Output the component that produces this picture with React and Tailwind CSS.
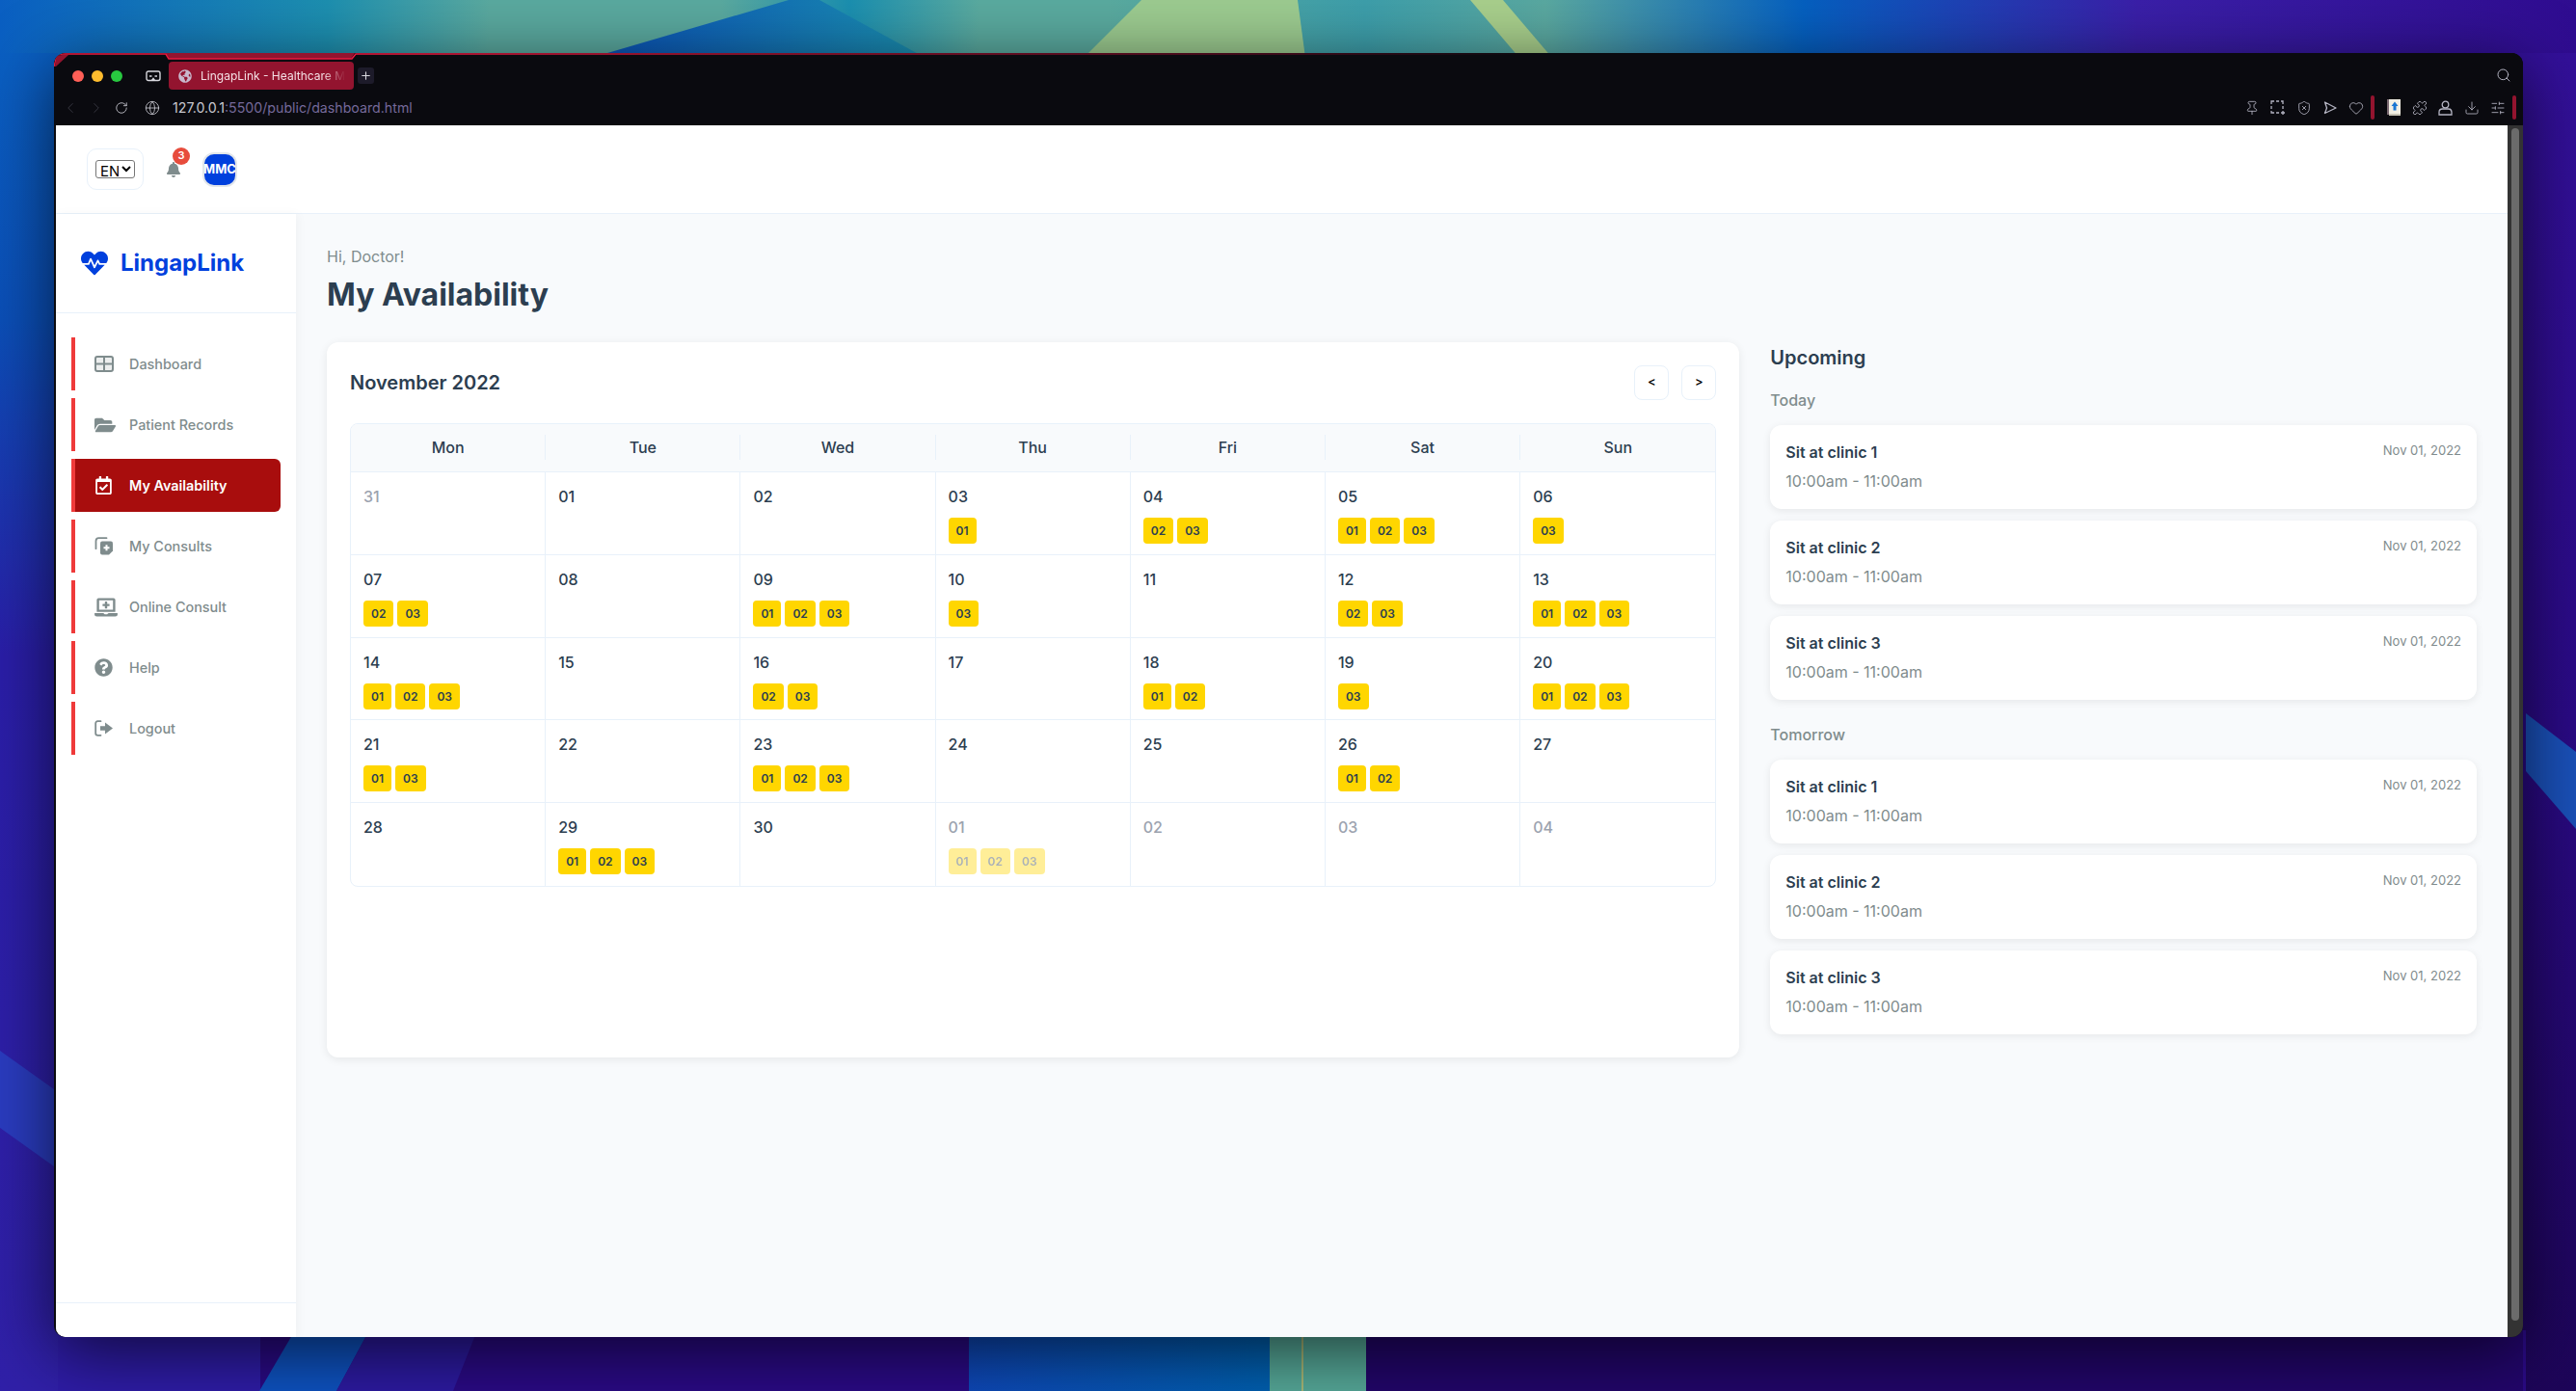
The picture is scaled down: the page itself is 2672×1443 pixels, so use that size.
import { ChevronLeft, ChevronRight, Download, Globe, Heart, Pin, Plus, Puzzle, RotateCw, Search, ShieldX, SlidersHorizontal } from "lucide-react"
import { FaBell, FaFolderOpen, FaGlobeAmericas, FaHeartbeat, FaLaptopMedical, FaQuestionCircle, FaRegCalendarCheck } from "react-icons/fa"

function Wallpaper() {
    return (
        <svg className="absolute inset-0" width="2672" height="1443" viewBox="0 0 2672 1443">
            <defs>
                <linearGradient id="top" x1="0" x2="1" y1="0" y2="0">
                    <stop offset="0" stopColor="#0a5fc2" />
                    <stop offset="0.127" stopColor="#1d8fb0" />
                    <stop offset="0.19" stopColor="#5aa99f" />
                    <stop offset="0.28" stopColor="#5aa99f" />
                    <stop offset="0.33" stopColor="#1b8fb0" />
                    <stop offset="0.38" stopColor="#5aaa9f" />
                    <stop offset="0.43" stopColor="#5aaa9f" />
                    <stop offset="0.53" stopColor="#3d9eaa" />
                    <stop offset="0.6" stopColor="#5aa8a0" />
                    <stop offset="0.7" stopColor="#0560c0" />
                    <stop offset="0.83" stopColor="#3a1fa8" />
                    <stop offset="1" stopColor="#2f0c90" />
                </linearGradient>
                <linearGradient id="side" x1="0" x2="0" y1="0" y2="1">
                    <stop offset="0" stopColor="#0a5fc2" />
                    <stop offset="0.2" stopColor="#0b4fb8" />
                    <stop offset="0.45" stopColor="#2a1ea8" />
                    <stop offset="1" stopColor="#3020a8" />
                </linearGradient>
                <linearGradient id="right" x1="0" x2="0" y1="0" y2="1">
                    <stop offset="0" stopColor="#33109a" />
                    <stop offset="0.5" stopColor="#2a0a85" />
                    <stop offset="1" stopColor="#1d0558" />
                </linearGradient>
                <linearGradient id="blue" x1="0" x2="1" y1="0" y2="0">
                    <stop offset="0" stopColor="#0e48b8" />
                    <stop offset="1" stopColor="#0060b0" />
                </linearGradient>
                <linearGradient id="wedge" x1="613" x2="960" y1="0" y2="0" gradientUnits="userSpaceOnUse">
                    <stop offset="0" stopColor="#0a50b8" />
                    <stop offset="1" stopColor="#1b8fb0" />
                </linearGradient>
            </defs>
            <rect x="0" y="0" width="2672" height="60" fill="url(#top)" />
            <rect x="0" y="55" width="60" height="1388" fill="url(#side)" />
            <rect x="2610" y="55" width="62" height="1388" fill="url(#right)" />
            <polygon points="2620,740 2672,780 2672,860 2620,800" fill="#1a50b8" />
            <polygon points="0,1090 56,1130 56,1210 0,1170" fill="#2a3cc0" />
            <polygon points="818,0 613,60 960,60 850,0" fill="url(#wedge)" />
            <polygon points="1184,0 1346,0 1354,60 1124,60" fill="#9ccb90" />
            <polygon points="1525,0 1559,0 1610,60 1576,60" fill="#a8cf8c" />
            <rect x="60" y="1380" width="2560" height="63" fill="#2a0a85" />
            <rect x="60" y="1380" width="210" height="63" fill="#2e1ca6" />
            <polygon points="306,1380 383,1380 349,1443 269,1443" fill="#0e52c0" />
            <polygon points="383,1380 495,1380 470,1443 349,1443" fill="#2c1aa0" />
            <rect x="1005" y="1380" width="312" height="63" fill="url(#blue)" />
            <rect x="1317" y="1380" width="100" height="63" fill="#55a898" />
            <rect x="1350" y="1380" width="2" height="63" fill="#a8b878" />
            <rect x="1417" y="1380" width="1200" height="63" fill="#22066a" />
        </svg>
    )
}

function MaskIcon() {
    return (
        <svg width="16" height="12" viewBox="0 0 16 12" fill="none" stroke="#d8d8de" strokeWidth="1.4">
            <rect x="1" y="1" width="14" height="9.5" rx="2" />
            <path d="M4 6h2.5M9.5 6H12M6.5 10.5 8 8.5l1.5 2" />
        </svg>
    )
}

function ScreenshotIcon() {
    return (
        <svg width="16" height="16" viewBox="0 0 16 16" fill="none" stroke="#b4b4c2" strokeWidth="1.3">
            <path d="M1 4V1h3M6 1h3M11 1h2v3M13 6v3M1 6v3M1 11v2h3M6 13h3" />
            <path d="M13 11v4M11 13h4" />
        </svg>
    )
}

function SendIcon() {
    return (
        <svg width="16" height="16" viewBox="0 0 16 16" fill="none" stroke="#b4b4c2" strokeWidth="1.3" strokeLinejoin="round">
            <path d="M2.5 2 14 8 2.5 13.5 4.5 8z" />
        </svg>
    )
}

function BookIcon() {
    return (
        <svg width="14" height="17" viewBox="0 0 14 17">
            <rect x="0" y="0" width="3" height="16" fill="#7b6a72" />
            <rect x="2" y="0" width="12" height="15" fill="#f2efe4" />
            <rect x="2" y="15" width="12" height="2" fill="#c8c4b6" />
            <path d="M8 2.5 11.5 7H9.5v4.5h-3V7H4.5z" fill="#1a76d2" />
        </svg>
    )
}

function AccountIcon() {
    return (
        <svg width="15" height="16" viewBox="0 0 15 16" fill="none" stroke="#b4b4c2" strokeWidth="1.3">
            <circle cx="7.5" cy="4.5" r="3.3" />
            <path d="M1 12.5C1 10 3 9 4.5 9h6c1.5 0 3.500 1 3.500 3.500V15H1z" />
        </svg>
    )
}

function DashboardIcon() {
    return (
        <svg width="20" height="17" viewBox="0 0 20 17" fill="none">
            <rect x="1" y="1" width="18" height="15" rx="2" fill="#7f8c8d" fillOpacity="0.15" stroke="#7f8c8d" strokeWidth="2" />
            <path d="M10 1v15M1 8.500h18" stroke="#7f8c8d" strokeWidth="2" />
        </svg>
    )
}

function ConsultsIcon() {
    return (
        <svg width="19" height="19" viewBox="0 0 19 19" fill="none">
            <path d="M12.500 1.200H4.500a3 3 0 0 0-3 3v8" stroke="#7f8c8d" strokeWidth="1.800" strokeLinecap="round" />
            <path d="M6 6.500a2 2 0 0 1 2-2h9a2 2 0 0 1 2 2v8l-4 4H8a2 2 0 0 1-2-2z" fill="#7f8c8d" />
            <path d="M12.500 8.200v6M9.500 11.200h6" stroke="#fff" strokeWidth="2" />
        </svg>
    )
}

function LogoutIcon() {
    return (
        <svg width="19" height="17" viewBox="0 0 19 17" fill="none">
            <path d="M6.500 1.200H3.200a2 2 0 0 0-2 2v10.600a2 2 0 0 0 2 2h3.300" stroke="#7f8c8d" strokeWidth="1.800" strokeLinecap="round" />
            <path d="M6 6.300h5V2.500L19 8.500l-8 6v-3.800H6z" fill="#7f8c8d" />
        </svg>
    )
}

const navItems = [
    { label: "Dashboard", icon: <DashboardIcon /> },
    { label: "Patient Records", icon: <FaFolderOpen size={22} /> },
    { label: "My Availability", icon: <FaRegCalendarCheck size={19} />, active: true },
    { label: "My Consults", icon: <ConsultsIcon /> },
    { label: "Online Consult", icon: <FaLaptopMedical size={24} /> },
    { label: "Help", icon: <FaQuestionCircle size={19} /> },
    { label: "Logout", icon: <LogoutIcon /> },
]

const days = ["Mon", "Tue", "Wed", "Thu", "Fri", "Sat", "Sun"]

const cells = [
    { d: "31", muted: true },
    { d: "01" },
    { d: "02" },
    { d: "03", b: ["01"] },
    { d: "04", b: ["02", "03"] },
    { d: "05", b: ["01", "02", "03"] },
    { d: "06", b: ["03"] },
    { d: "07", b: ["02", "03"] },
    { d: "08" },
    { d: "09", b: ["01", "02", "03"] },
    { d: "10", b: ["03"] },
    { d: "11" },
    { d: "12", b: ["02", "03"] },
    { d: "13", b: ["01", "02", "03"] },
    { d: "14", b: ["01", "02", "03"] },
    { d: "15" },
    { d: "16", b: ["02", "03"] },
    { d: "17" },
    { d: "18", b: ["01", "02"] },
    { d: "19", b: ["03"] },
    { d: "20", b: ["01", "02", "03"] },
    { d: "21", b: ["01", "03"] },
    { d: "22" },
    { d: "23", b: ["01", "02", "03"] },
    { d: "24" },
    { d: "25" },
    { d: "26", b: ["01", "02"] },
    { d: "27" },
    { d: "28" },
    { d: "29", b: ["01", "02", "03"] },
    { d: "30" },
    { d: "01", muted: true, b: ["01", "02", "03"] },
    { d: "02", muted: true },
    { d: "03", muted: true },
    { d: "04", muted: true },
]

function BrowserChrome() {
    return (
        <div className="relative h-[75px] shrink-0 bg-[#0a0a0f]">
            <svg className="absolute left-0 top-0" width="2561" height="14" viewBox="0 0 2561 14" fill="none">
                <defs>
                    <linearGradient id="edge" x1="0" x2="2561" y1="0" y2="0" gradientUnits="userSpaceOnUse">
                        <stop offset="0" stopColor="#e8193f" />
                        <stop offset="0.14" stopColor="#e8193f" />
                        <stop offset="0.5" stopColor="#4a0a1c" />
                        <stop offset="0.6" stopColor="#0a0a0f" />
                    </linearGradient>
                </defs>
                <path d="M116 0h196l-4 6H120z" fill="#93142f" />
                <path d="M0 14 2 6Q3 1 9 1h107l3 5h190l4-5h2246" stroke="url(#edge)" strokeWidth="1.500" />
                <path d="M1 14 2 6Q3 2 9 2h6L2 14z" fill="#93142f" />
            </svg>
            <div className="flex h-[38px] items-end pl-[19px]">
                <div className="flex h-[29px] items-center">
                    <span className="h-3 w-3 rounded-full bg-[#ff5f57]" />
                    <span className="ml-2 h-3 w-3 rounded-full bg-[#febc2e]" />
                    <span className="ml-2 h-3 w-3 rounded-full bg-[#28c840]" />
                    <span className="ml-6 flex w-4 justify-center"><MaskIcon /></span>
                    <div className="ml-2 flex h-[29px] w-[192px] items-center overflow-hidden rounded-[4px] bg-[#93142f] pl-[10px] text-[12px] text-[#f4dfe4]">
                        <FaGlobeAmericas size={14} className="shrink-0 text-[#c9b8cc]" />
                        <span className="ml-[9px] whitespace-nowrap [mask-image:linear-gradient(to_right,black_85%,transparent)]">LingapLink - Healthcare M</span>
                    </div>
                    <span className="ml-1 flex h-[17px] w-[17px] items-center justify-center rounded-[3px] bg-[#1d1b2a] text-[#d8d8de]"><Plus size={13} /></span>
                </div>
                <Search size={16} strokeWidth={1.500} className="mb-[7px] ml-auto mr-[12px] text-[#b4b4c2]" />
            </div>
            <div className="flex h-[37px] items-center pl-[8px] pr-[7px]">
                <ChevronLeft size={18} strokeWidth={1.200} className="text-[#3a3a44]" />
                <ChevronRight size={18} strokeWidth={1.200} className="ml-[9px] text-[#3a3a44]" />
                <RotateCw size={14} strokeWidth={1.500} className="ml-[10px] text-[#c4c4cc]" />
                <Globe size={16} strokeWidth={1.300} className="ml-[17px] text-[#c4c4cc]" />
                <span className="ml-[13px] text-[14.200px] text-[#c8c8d0]">127.0.0.1<span className="text-[#75699a]">:5500/public/dashboard.html</span></span>
                <div className="ml-auto flex items-center text-[#b4b4c2]">
                    <span className="flex w-[27px] justify-center"><Pin size={16} strokeWidth={1.300} /></span>
                    <span className="flex w-[27px] justify-center"><ScreenshotIcon /></span>
                    <span className="flex w-[27px] justify-center"><ShieldX size={16} strokeWidth={1.300} /></span>
                    <span className="flex w-[27px] justify-center"><SendIcon /></span>
                    <span className="flex w-[27px] justify-center"><Heart size={16} strokeWidth={1.300} /></span>
                    <span className="ml-[2px] h-[25px] w-[4px] rounded-[2px] bg-[#93142f]" />
                    <span className="ml-[6px] flex w-[27px] justify-center"><BookIcon /></span>
                    <span className="flex w-[27px] justify-center"><Puzzle size={16} strokeWidth={1.300} /></span>
                    <span className="flex w-[27px] justify-center"><AccountIcon /></span>
                    <span className="flex w-[27px] justify-center"><Download size={16} strokeWidth={1.300} /></span>
                    <span className="flex w-[27px] justify-center"><SlidersHorizontal size={16} strokeWidth={1.300} /></span>
                    <span className="ml-[2px] h-[25px] w-[4px] rounded-[2px] bg-[#93142f]" />
                </div>
            </div>
        </div>
    )
}

function TopBar() {
    return (
        <header className="flex h-[92px] shrink-0 items-center border-b border-[#e8f1fa] bg-white pl-[32px]">
            <div className="flex h-[43px] w-[59px] items-center justify-center rounded-[10px] border border-[#e8f1fa]">
                <select className="h-[19px] w-[41px] appearance-auto rounded-[3px] border border-[#767676] bg-white text-[15px] text-black">
                    <option>EN</option>
                </select>
            </div>
            <div className="relative ml-[23px] text-[#7f8c8d]">
                <FaBell size={16} />
                <span className="absolute -right-[9px] -top-[15px] flex h-[18px] w-[18px] items-center justify-center rounded-full bg-[#e74c3c] text-[11px] font-semibold text-white">3</span>
            </div>
            <div className="ml-[22px] flex h-[36px] w-[36px] items-center justify-center overflow-hidden rounded-[12px] border-2 border-[#e2e6ea] bg-[#0040dd] text-[13px] font-bold text-white">
                MMC
            </div>
        </header>
    )
}

function Sidebar() {
    return (
        <aside className="flex w-[249px] shrink-0 flex-col bg-white shadow-[2px_0_10px_rgba(0,0,0,0.04)]">
            <div className="flex h-[103px] shrink-0 items-center gap-[13px] border-b border-[#e8f1fa] pl-[26px]">
                <FaHeartbeat size={28} className="text-[#0040dd]" />
                <span className="text-[24px] font-bold text-[#0040dd]">LingapLink</span>
            </div>
            <nav className="mt-[25px] flex flex-1 flex-col gap-[8px] pl-[16px] pr-[16px]">
                {navItems.map((item) => (
                    <a
                        key={item.label}
                        className={`flex h-[55px] items-center rounded-r-[6px] border-l-4 border-[#ef3a3a] pl-[20px] text-[14.400px] font-medium ${
                            item.active ? "bg-[#a80d0d] font-semibold text-white" : "text-[#7f8c8d]"
                        }`}
                    >
                        <span className="flex w-[36px] shrink-0 items-center">{item.icon}</span>
                        {item.label}
                    </a>
                ))}
            </nav>
            <div className="h-[36px] shrink-0 border-t border-[#e8f1fa]" />
        </aside>
    )
}

function Calendar() {
    return (
        <section className="h-[742px] rounded-[12px] bg-white p-6 shadow-[0_2px_10px_rgba(0,0,0,0.08)]">
            <div className="mb-6 flex items-center justify-between">
                <h2 className="text-[20px] font-semibold text-[#2c3e50]">November 2022</h2>
                <div className="flex gap-[13px]">
                    <button type="button" className="h-9 w-9 rounded-[8px] border border-[#e8f1fa] bg-white text-[13px] font-medium text-black">&lt;</button>
                    <button type="button" className="h-9 w-9 rounded-[8px] border border-[#e8f1fa] bg-white text-[13px] font-medium text-black">&gt;</button>
                </div>
            </div>
            <div className="overflow-hidden rounded-[8px] border border-[#e8f1fa]">
                <div className="grid grid-cols-7 border-b border-[#e8f1fa] bg-[#f8fafc] pb-[12px] pt-[11px]">
                    {days.map((day, i) => (
                        <div
                            key={day}
                            className={`h-[26px] text-center text-[16px] font-medium leading-[26px] text-[#2c3e50] ${i < 6 ? "border-r border-[#e8f1fa]" : ""}`}
                        >
                            {day}
                        </div>
                    ))}
                </div>
                <div className="grid grid-cols-7">
                    {cells.map((cell, i) => (
                        <div
                            key={i}
                            className={`h-[85.800px] px-[13px] pt-[13px] ${i % 7 < 6 ? "border-r" : ""} ${i < 28 ? "border-b" : ""} border-[#e8f1fa]`}
                        >
                            <div className={`text-[16px] font-medium leading-[24px] ${cell.muted ? "text-[#9ca3af]" : "text-[#2c3e50]"}`}>{cell.d}</div>
                            {cell.b && (
                                <div className={`mt-[10px] flex gap-1 ${cell.muted ? "opacity-40" : ""}`}>
                                    {cell.b.map((badge) => (
                                        <span key={badge} className="h-[27px] rounded-[4px] bg-[#ffd600] px-2 text-[12px] font-semibold leading-[27px] text-[#2c3e50]">
                                            {badge}
                                        </span>
                                    ))}
                                </div>
                            )}
                        </div>
                    ))}
                </div>
            </div>
        </section>
    )
}

function EventCard({ title }) {
    return (
        <div className="flex h-[87px] justify-between rounded-[12px] bg-white p-4 shadow-[0_2px_8px_rgba(0,0,0,0.08)]">
            <div>
                <div className="text-[16px] font-semibold leading-[24px] text-[#2c3e50]">{title}</div>
                <div className="mt-[6px] text-[16px] leading-[24px] text-[#7f8c8d]">10:00am - 11:00am</div>
            </div>
            <div className="text-[13px] leading-[20px] text-[#7f8c8d]">Nov 01, 2022</div>
        </div>
    )
}

function Upcoming() {
    const clinics = ["Sit at clinic 1", "Sit at clinic 2", "Sit at clinic 3"]
    return (
        <section>
            <h2 className="text-[20px] font-semibold leading-[32px] text-[#2c3e50]">Upcoming</h2>
            <h3 className="mb-[14px] mt-[16px] text-[16px] font-medium leading-[24px] text-[#7f8c8d]">Today</h3>
            <div className="flex flex-col gap-3">
                {clinics.map((c) => <EventCard key={c} title={c} />)}
            </div>
            <h3 className="mb-[14px] mt-[24px] text-[16px] font-medium leading-[24px] text-[#7f8c8d]">Tomorrow</h3>
            <div className="flex flex-col gap-3">
                {clinics.map((c) => <EventCard key={c} title={c} />)}
            </div>
        </section>
    )
}

export default function App() {
    return (
        <div className="relative h-[1443px] w-[2672px] overflow-hidden bg-[#22066a] pl-[56px] pt-[55px] font-['Inter',sans-serif]">
            <Wallpaper />
            <div className="relative flex h-[1332px] w-[2561px] flex-col overflow-hidden rounded-[12px] bg-[#0a0a0f] shadow-[0_15px_70px_rgba(0,0,0,0.65)]">
                <BrowserChrome />
                <div className="flex min-h-0 flex-1 pl-[2px]">
                    <div className="flex min-w-0 flex-1 flex-col overflow-hidden rounded-bl-[10px] bg-[#f8fafc]">
                        <TopBar />
                        <div className="flex min-h-0 flex-1">
                            <Sidebar />
                            <main className="min-w-0 flex-1 px-8 pt-[32px]">
                                <p className="text-[16px] leading-[24px] text-[#7f8c8d]">Hi, Doctor!</p>
                                <h1 className="mb-[26px] mt-[5px] text-[32px] font-bold leading-[46px] text-[#2c3e50]">My Availability</h1>
                                <div className="grid grid-cols-[2fr_1fr] gap-8">
                                    <Calendar />
                                    <Upcoming />
                                </div>
                            </main>
                        </div>
                    </div>
                    <div className="flex w-[16px] shrink-0 flex-col bg-[#333333] px-[4px] pb-[17px] pt-[3px]">
                        <div className="flex-1 rounded-[4px] bg-[#6b6b6b]" />
                    </div>
                </div>
            </div>
        </div>
    )
}
